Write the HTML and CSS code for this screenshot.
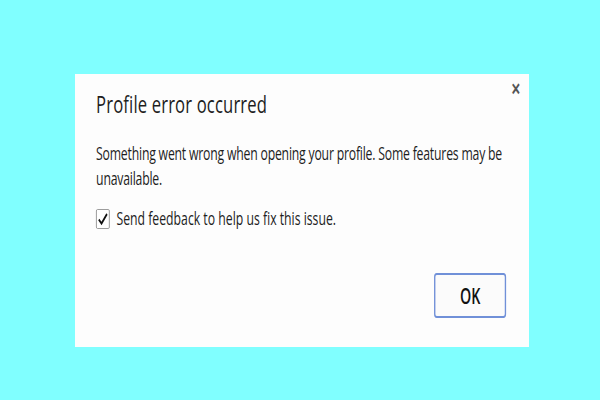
FILE: index.html
```html
<!DOCTYPE html>
<html lang="en">

<head>
  <meta charset="UTF-8">
  <meta name="viewport" content="width=device-width, initial-scale=1.0">
  <title>Profile error occurred</title>
  <link rel="stylesheet" href="styles.css">
</head>

<body>
  <div class="dialog">
    <div class="inner">
      <div class="header">
        <h1 class="title">Profile error occurred</h1>
        <span class="close">&#x2715;</span>
      </div>
      <p class="msg">Something went wrong when opening your profile. Some features may be unavailable.</p>
      <label class="check">
        <span class="box">
          <svg width="16" height="14" viewBox="0 0 16 14">
            <path d="M2 7.5 L6 11.5 L14 2" fill="none" stroke="#111" stroke-width="2.4" />
          </svg>
        </span>
        Send feedback to help us fix this issue.
      </label>
      <div class="actions">
        <button class="ok">OK</button>
      </div>
    </div>
  </div>
</body>

</html>
```

FILE: styles.css
```css
html,
body {
  margin: 0;
  height: 100%;
}

body {
  background: #80ffff;
  padding: 74px 0 0 75px;
  box-sizing: border-box;
  font-family: "Open Sans", "Noto Sans", sans-serif;
  color: #1e1e1e;
}

.dialog {
  width: 454px;
  height: 273px;
  background: #fdfdfd;
  overflow: hidden;
}

/* the shot is squeezed sideways, so lay out wide and squeeze */
.inner {
  width: 668px;
  height: 273px;
  box-sizing: border-box;
  padding: 15px 34px 29px 31px;
  display: flex;
  flex-direction: column;
  transform: scaleX(0.68);
  transform-origin: left top;
}

.header {
  display: flex;
  justify-content: space-between;
  align-items: flex-start;
}

.title {
  margin: 0;
  font-size: 24.5px;
  line-height: 30px;
  font-weight: normal;
  letter-spacing: 0.2px;
}

.close {
  font-size: 17px;
  font-weight: bold;
  color: #555;
  margin-top: -12px;
  margin-right: -21px;
}

.msg {
  margin: 22px 0 0;
  font-size: 18px;
  line-height: 25px;
  letter-spacing: -0.3px;
}

.check {
  margin-top: 15px;
  display: flex;
  align-items: center;
  gap: 10px;
  font-size: 18px;
  line-height: 25px;
}

.box {
  width: 20px;
  height: 20px;
  border: 1px solid #8a8a8a;
  border-radius: 2px;
  box-sizing: border-box;
  display: flex;
  align-items: center;
  justify-content: center;
  background: #fff;
}

.actions {
  margin-top: auto;
  display: flex;
  justify-content: flex-end;
}

.ok {
  width: 106px;
  height: 45px;
  border: 2px solid #7090d8;
  border-radius: 4px;
  background: #fbfbfb;
  font-family: "Open Sans", "Noto Sans", sans-serif;
  font-size: 21px;
  font-weight: 600;
  color: #111;
}
```
